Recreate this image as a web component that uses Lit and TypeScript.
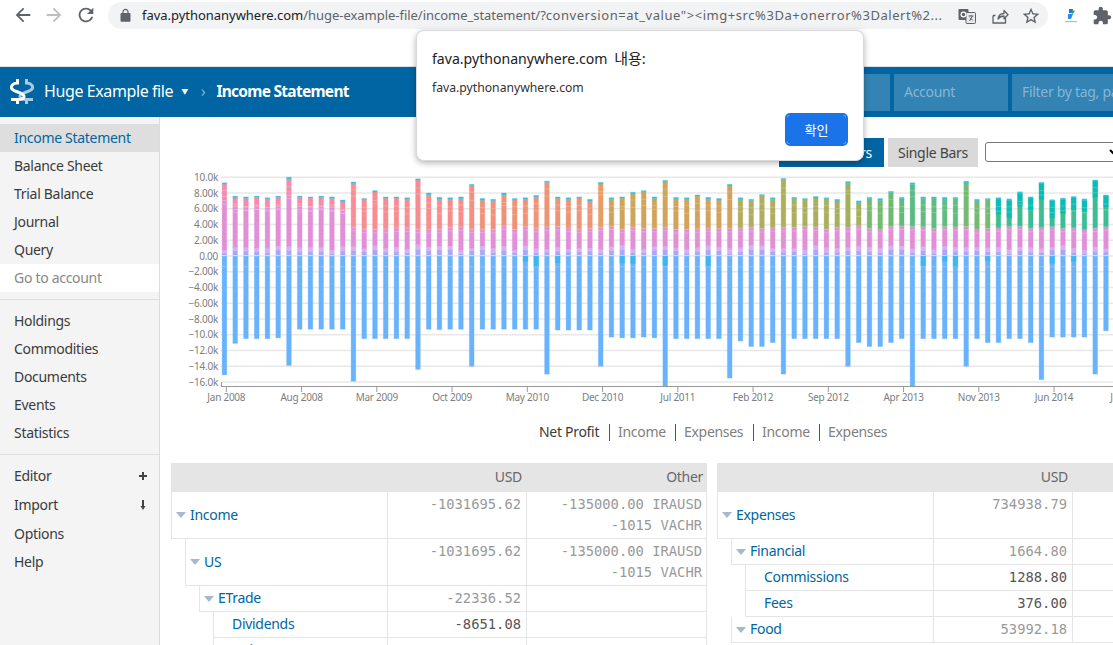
import { LitElement, html, svg, css } from "lit";
import { customElement } from "lit/decorators.js";

const tops = [9.3,7.6,7.5,7.6,7.4,7.6,10.0,7.6,7.5,7.6,7.5,7.1,9.4,7.3,8.3,7.5,7.5,7.4,9.8,
  8.0,7.45,7.4,7.5,9.1,7.3,7.2,8.0,7.3,7.4,7.7,9.5,7.5,7.4,7.5,7.2,9.35,7.4,7.5,8.1,8.3,7.5,9.6,7.45,7.4,7.75,
  7.45,7.3,9.1,7.4,7.2,7.8,7.4,9.85,7.45,7.3,7.55,7.4,7.2,9.45,7.0,7.45,7.3,8.2,7.45,9.3,7.5,7.5,7.45,7.45,9.5,7.2,7.3,7.4,7.25,8.15,7.5,9.35,7.15,7.35,7.55,7.25,9.65,7.75];
const bottoms = [-15.1,-11.1,-10.5,-10.5,-10.5,-10.4,-13.9,-9.3,-9.3,-9.3,-9.3,-9.3,-15.9,-10.5,-10.5,-10.5,-10.5,-10.5,-14.4,-9.3,-9.35,-9.3,-9.3,-14.0,
  -9.3,-9.3,-9.3,-9.3,-9.3,-9.3,-15.0,-9.4,-9.4,-9.4,-9.4,-14.0,-10.3,-10.4,-10.4,-10.3,-10.4,-16.6,-10.5,-10.5,-10.5,-10.5,-10.5,-15.5,-10.8,-11.5,-11.5,-11.0,-15.0,-10.5,-10.5,-10.5,-10.5,-10.5,-14.0,-11.0,-11.5,-11.5,-11.0,-10.5,-16.6,-10.5,-10.5,-10.5,-10.5,-14.0,-10.5,-11.0,-11.0,-10.5,-10.5,-11.0,-15.7,-10.3,-10.3,-10.3,-10.3,-15.0,-9.5];
const stops: [number, number[]][] = [
  [0,[243,140,176]],[11,[247,140,168]],[12,[249,140,148]],[22,[248,140,140]],[24,[239,146,120]],[34,[238,149,117]],[35,[234,156,102]],[36,[208,164,88]],
  [47,[211,163,91]],[48,[178,173,95]],[59,[164,176,92]],[60,[121,185,110]],[62,[110,186,114]],[64,[88,188,130]],[65,[98,188,128]],[68,[98,188,128]],[69,[118,185,114]],[71,[118,185,114]],[72,[63,188,144]],[82,[61,189,150]],
];
function topColor(m: number) {
  for (let i = 0; i < stops.length - 1; i++) {
    const [a, ca] = stops[i];
    const [b, cb] = stops[i + 1];
    if (m >= a && m <= b) {
      const t = (m - a) / (b - a);
      return `rgb(${ca.map((v, j) => Math.round(v + (cb[j] - v) * t)).join(",")})`;
    }
  }
  return "rgb(61,189,150)";
}
const rnd = (m: number, s: number) => {
  const v = Math.sin(m * 12.9898 + s * 78.233) * 43758.5453;
  return v - Math.floor(v);
};
const Y = (k: number) => 86 - 7.875 * k; // svg top is page y 170
const X = (m: number) => 62.1 + 10.75 * m; // svg left is page x 160
const BW = 4.7;

const yLabels: [number, string][] = [[10,"10.0k"],[8,"8.00k"],[6,"6.00k"],[4,"4.00k"],[2,"2.00k"],[0,"0.00"],[-2,"−2.00k"],[-4,"−4.00k"],[-6,"−6.00k"],[-8,"−8.00k"],[-10,"−10.0k"],[-12,"−12.0k"],[-14,"−14.0k"],[-16,"−16.0k"]];
const xLabels = ["Jan 2008","Aug 2008","Mar 2009","Oct 2009","May 2010","Dec 2010","Jul 2011","Feb 2012","Sep 2012","Apr 2013","Nov 2013","Jun 2014","Jan 2015"];

function seg(x: number, from: number, to: number, color: string) {
  const y = Y(to);
  const h = Y(from) - y;
  return svg`<rect class="seg" x=${x} y=${y} width=${BW} height=${h} fill=${color} stroke=${color}></rect>`;
}
function line(x: number, k: number) {
  return svg`<rect x=${x} y=${Y(k)} width=${BW} height="1" fill="#fff" opacity="0.22"></rect>`;
}

function chart() {
  const bars = tops.map((top, m) => {
    const x = X(m);
    const p1 = 0.3 + rnd(m, 1) * 0.55;
    const p2 = p1 + 0.35 + rnd(m, 2) * 0.25;
    const mid = m < 12 ? top - 1.3 - (top > 9 ? 1 : 0) : 3.3 + rnd(m, 3) * 0.5;
    const cap = top - 0.12 - rnd(m, 4) * 0.12;
    const c = topColor(m);
    const cyan = rnd(m, 5) > 0.86 && m > 20;
    const parts = [
      seg(x, bottoms[m], -0.02, "#69b2fd"),
      cyan ? seg(x, -0.6 - rnd(m, 9) * 0.8, -0.02, "#3db6f4") : null,
      seg(x, 0.12, p1, "#a9a7f7"),
      seg(x, p1, p2, "#d5b1ed"),
      seg(x, p2, mid, "#e18fd7"),
      seg(x, mid, cap, c),
      m >= 72 ? seg(x, top - 1.5 - rnd(m, 6), cap, "#0abdb4") : null,
      seg(x, cap, top, "#2cc3e4"),
      line(x, -1.3),
      line(x, mid - 0.35),
      line(x, mid + 0.1),
      line(x, top - 0.9 - rnd(m, 7) * 0.3),
      line(x, top - 1.5 - rnd(m, 8) * 0.5),
    ];
    return parts;
  });
  return html`<svg class="chart" width="953" height="240" viewBox="0 0 953 240">
    ${yLabels.map(([k]) => svg`<line x1="61" x2="953" y1=${Y(k)} y2=${Y(k)} class="grid"></line>`)}
    ${bars}
    <line x1="61" x2="953" y1="216.5" y2="216.5" class="axis"></line>
    <line x1="61.5" x2="61.5" y1="212" y2="216" class="axis"></line>
    ${yLabels.map(([k, t]) => svg`<text x="58" y=${Y(k) + 3.5} text-anchor="end" class="tick">${t}</text>`)}
    ${xLabels.map((t, i) => svg`
      <line x1=${66.3 + 75.25 * i} x2=${66.3 + 75.25 * i} y1="217" y2="222" class="axis"></line>
      <text x=${66.3 + 75.25 * i} y="231" text-anchor="middle" class="tick">${t}</text>`)}
  </svg>`;
}

interface Row { name: string; depth: number; usd: string; other?: string[]; kids?: boolean; leaf?: boolean; tall?: boolean; }
const incomeRows: Row[] = [
  { name: "Income", depth: 0, usd: "-1031695.62", other: ["-135000.00 IRAUSD", "-1015 VACHR"], kids: true, tall: true },
  { name: "US", depth: 1, usd: "-1031695.62", other: ["-135000.00 IRAUSD", "-1015 VACHR"], kids: true, tall: true },
  { name: "ETrade", depth: 2, usd: "-22336.52", kids: true },
  { name: "Dividends", depth: 3, usd: "-8651.08", leaf: true },
  { name: "Gains", depth: 3, usd: "-13685.44", leaf: true },
];
const expenseRows: Row[] = [
  { name: "Expenses", depth: 0, usd: "734938.79", kids: true, tall: true },
  { name: "Financial", depth: 1, usd: "1664.80", kids: true },
  { name: "Commissions", depth: 2, usd: "1288.80", leaf: true },
  { name: "Fees", depth: 2, usd: "376.00", leaf: true },
  { name: "Food", depth: 1, usd: "53992.18", kids: true },
];

@customElement("app-root")
export class AppRoot extends LitElement {
  static styles = css`
    :host { display: block; width: 1113px; height: 645px; overflow: hidden; position: relative; background: #fff;
      font-family: "Noto Sans", "Noto Sans CJK KR", sans-serif; font-size: 14px; letter-spacing: -0.3px; color: #3b3b3b; }
    .chrome { height: 67px; background: #fff; box-sizing: border-box; border-bottom: 1px solid #d9e2e8; letter-spacing: 0; }
    .toolbar { display: flex; height: 36px; align-items: flex-start; padding-left: 7px; }
    .nav { width: 31px; height: 30px; flex: none; display: flex; align-items: center; justify-content: center; fill: #5f6368; }
    .nav.off { fill: #bcbec0; }
    .nav.wide { width: 33px; margin-right: 6px; }
    .pill { width: 940px; flex: none; height: 27px; margin-top: 2px; box-sizing: border-box; background: #f1f3f4; border-radius: 14px; display: flex; align-items: center; padding-left: 10px; }
    .lock { width: 15px; height: 15px; fill: #5f6368; margin-right: 9px; flex: none; }
    .url { width: 806px; flex: none; white-space: nowrap; overflow: hidden; color: #5f6368; font-size: 13px; line-height: 27px; letter-spacing: -0.03px; }
    .url b { font-weight: 400; color: #202124; }
    .url span { letter-spacing: 0.55px; }
    .pill-icons { display: flex; margin-left: 9px; gap: 12px; }
    .pill-icons svg { width: 20px; height: 20px; display: block; }
    .ext { display: flex; flex: none; align-items: center; margin-left: 16px; height: 31px; gap: 14px; }
    .ext svg { display: block; }
    .header { height: 50px; background: #0065a2; color: #fff; display: flex; align-items: center; overflow: hidden; }
    .crumbs { flex: 0 0 760px; display: flex; align-items: center; box-sizing: border-box; padding: 0 0 2px 10px; font-size: 16px; letter-spacing: -0.4px; }
    .logo { width: 24px; height: 28px; margin: 2px 10px 0 0; flex: none; }
    .caret { font-size: 7px; margin: 0 13px 0 8px; }
    .sep { color: #80b2d0; margin-right: 11px; }
    .crumbs strong { font-weight: 700; font-size: 15.5px; letter-spacing: -0.72px; }
    .filters { display: flex; gap: 4px; }
    .filter { height: 37px; line-height: 35px; background: rgba(255,255,255,.2); color: rgba(255,255,255,.42); padding-left: 10px; box-sizing: border-box; font-size: 14px; white-space: nowrap; overflow: hidden; }
    .f1 { width: 130px; } .f2 { width: 114px; } .f3 { width: 230px; }
    .body { display: flex; }
    .side { width: 160px; height: 528px; flex: none; box-sizing: border-box; background: #f4f4f4; border-right: 1px solid #dcdcdc; }
    .sec { padding: 7px 0; border-bottom: 1px solid #dedede; }
    .sec:last-child { border-bottom: 0; }
    .item { height: 28px; line-height: 28px; padding: 0 11px 0 14px; display: flex; justify-content: space-between; align-items: center; }
    .item.big { margin-bottom: 1px; }
    .item.active { background: #dedede; color: #0065a2; }
    .item.go { background: #fff; color: #888; }
    .item svg { display: block; }
    .main { flex: 1; min-width: 0; overflow: hidden; padding-top: 21px; }
    .tools { display: flex; padding-left: 619px; height: 29px; align-items: flex-start; }
    .btn { flex: none; height: 29px; line-height: 29px; box-sizing: border-box; padding: 0 10px; background: #d9d9d9; color: #444; white-space: nowrap; font-size: 14px; }
    .btn.on { background: #0065a2; color: #fff; width: 105px; margin-right: 4px; text-align: center; }
    .btn.off { width: 90px; text-align: center; margin-right: 7px; }
    .tools select { width: 138px; height: 20px; margin-top: 4px; flex: none; background: #fff; border: 1px solid #767676; border-radius: 3px; font-size: 13px; }
    .chart { display: block; margin-top: 3px; }
    .chart .grid { stroke: #e8e8e8; stroke-width: 1.4; }
    .chart .axis { stroke: #999; stroke-width: 1; }
    .chart .tick { font-size: 10px; fill: #7d7d7d; font-family: "Noto Sans", sans-serif; letter-spacing: -0.25px; }
    .chart .seg { stroke-opacity: .28; stroke-width: 1; }
    .legend { display: flex; height: 25px; margin-top: 10px; padding-left: 379px; align-items: center; white-space: nowrap; color: #808080; }
    .legend span { height: 17px; line-height: 15px; box-sizing: content-box; }
    .legend .first { color: #3b3b3b; width: 70px; }
    .legend .lg { border-left: 1px solid #555; padding-left: 8px; }
    .l1 { width: 57px; } .l2 { width: 69px; } .l3 { width: 57px; } .l4 { width: 60px; }
    .trees { display: flex; gap: 10px; margin: 18px 0 0 11px; }
    .tree { flex: none; width: 536px; }
    .thead { display: flex; height: 29px; line-height: 27px; background: #e5e5e5; color: #686868; }
    .row { display: flex; height: 26px; }
    .row.tall { height: 47px; }
    .name { flex: 1; min-width: 0; box-sizing: border-box; display: flex; align-items: center; padding: 0 0 2px 4px; border: solid #e5e5e5; border-width: 0 1px 1px 1px; color: #0065a2; white-space: nowrap; }
    .name.leaf { padding-left: 18px; }
    .tri { width: 0; height: 0; border: solid transparent; border-width: 6px 5px 0; border-top-color: #a9b8c9; margin: 2px 4px 0 0; flex: none; }
    .num { flex: none; box-sizing: border-box; border-right: 1px solid #e5e5e5; border-bottom: 1px solid #e5e5e5; text-align: right; padding: 2px 5px 2px 0; font-family: "DejaVu Sans Mono", "Liberation Mono", monospace; font-size: 13.8px; letter-spacing: 0; line-height: 21px; color: #999; white-space: nowrap; }
    .num.dark { color: #555; }
    .num div { height: 21px; }
    .thead .cell { flex: none; box-sizing: border-box; text-align: right; padding-right: 5px; }
    .c1 { width: 139px; }
    .c2 { width: 180px; padding-right: 4px !important; }
    .thead .grow { flex: 1; }
    .dialog { position: absolute; left: 416px; top: 30px; width: 448px; height: 131px; box-sizing: border-box; background: #fff; border: 1px solid #d8d8d8; border-radius: 8px; box-shadow: 0 2px 6px rgba(0,0,0,.3); padding: 17px 16px 0 15px; color: #202124; display: flex; flex-direction: column; letter-spacing: 0; }
    .d-title { font-size: 14.1px; line-height: 20px; }
    .d-title span { font-size: 15px; margin-left: 3px; }
    .d-msg { font-size: 12.2px; line-height: 16px; margin-top: 11px; color: #333; }
    .d-btn { align-self: flex-end; margin-top: 18px; width: 61px; height: 31px; box-sizing: border-box; background: #1a73e8; color: #fff; border-radius: 4px; border: 1px solid #fff; outline: 2px solid #1a73e8; outline-offset: -1px; font-size: 13px; display: flex; align-items: center; justify-content: center; }
  `;

  private renderTree(rows: Row[]) {
    return html`<div class="tree">
      <div class="thead"><div class="cell grow"></div><div class="cell c1">USD</div><div class="cell c2">Other</div></div>
      ${rows.map((r) => html`<div class="row ${r.tall ? "tall" : ""}">
        <div class="name ${r.leaf ? "leaf" : ""}" style="margin-left:${r.depth * 14}px">${r.kids ? html`<span class="tri"></span>` : null}<span>${r.name}</span></div>
        <div class="num c1 ${r.leaf ? "dark" : ""}">${r.usd}</div>
        <div class="num c2">${(r.other || []).map((o) => html`<div>${o}</div>`)}</div>
      </div>`)}
    </div>`;
  }

  render() {
    return html`
      <div class="chrome">
        <div class="toolbar">
          <div class="nav"><svg width="22" height="22" viewBox="0 0 24 24"><path d="M20 11H7.83l5.59-5.59L12 4l-8 8 8 8 1.41-1.41L7.83 13H20v-2z"/></svg></div>
          <div class="nav off"><svg width="22" height="22" viewBox="0 0 24 24"><path d="M12 4l-1.41 1.41L16.17 11H4v2h12.17l-5.58 5.59L12 20l8-8z"/></svg></div>
          <div class="nav wide"><svg width="22" height="22" viewBox="0 0 24 24"><path d="M17.65 6.35C16.2 4.9 14.21 4 12 4c-4.42 0-7.99 3.58-7.99 8s3.57 8 7.99 8c3.73 0 6.84-2.55 7.73-6h-2.08c-.82 2.33-3.04 4-5.65 4-3.31 0-6-2.69-6-6s2.69-6 6-6c1.66 0 3.14.69 4.22 1.78L13 11h7V4l-2.35 2.35z"/></svg></div>
          <div class="pill">
            <svg class="lock" viewBox="0 0 24 24"><path d="M18 8h-1V6c0-2.76-2.24-5-5-5S7 3.24 7 6v2H6c-1.1 0-2 .9-2 2v10c0 1.1.9 2 2 2h12c1.1 0 2-.9 2-2V10c0-1.1-.9-2-2-2zM9 6c0-1.66 1.34-3 3-3s3 1.34 3 3v2H9V6z"/></svg>
            <div class="url"><b>fava.pythonanywhere.com</b>/huge-example-file/income_statement/?<span>conversion=at_value"&gt;&lt;img+src%3Da+onerror%3Dalert%2...</span></div>
            <div class="pill-icons">
              <svg viewBox="0 0 20 20"><rect x="1.5" y="3" width="10" height="11" rx="1" fill="#5f6368"/><rect x="9" y="6.5" width="9.5" height="11" rx="1" fill="#e8eaed" stroke="#5f6368"/><circle cx="6.5" cy="8.5" r="2.4" fill="none" stroke="#fff" stroke-width="1.2"/><path d="M11.5 10h5M14 9v1M12.5 15l3-5M12.8 11.5l3 3" stroke="#5f6368" fill="none"/></svg>
              <svg viewBox="0 0 20 20"><path d="M4 9.5V17h12.5v-5M4 9.5h2.5M9 13c.5-3.5 3-5.5 6-5.5V4.5l4 4.3-4 4V10c-2.5 0-4.5 1-6 3z" fill="none" stroke="#5f6368" stroke-width="1.3" stroke-linejoin="round"/></svg>
              <svg viewBox="0 0 24 24" fill="#5f6368"><path d="M22 9.24l-7.19-.62L12 2 9.19 8.63 2 9.24l5.46 4.73L5.82 21 12 17.27 18.18 21l-1.63-7.03L22 9.24zM12 15.4l-3.76 2.27 1-4.28-3.32-2.88 4.38-.38L12 6.1l1.71 4.04 4.38.38-3.32 2.88 1 4.28L12 15.4z"/></svg>
            </div>
          </div>
          <div class="ext">
            <svg width="14" height="18" viewBox="0 0 14 18"><path d="M5 2h4l-1 4H5z" fill="#1a73e8"/><path d="M8 3l3 1-2 3-2-1z" fill="#34a853"/><path d="M4 7h5l-2 5H4z" fill="#2a8fe8"/><rect x="1" y="14" width="12" height="1.2" fill="#bbb"/></svg>
            <svg width="20" height="20" viewBox="0 0 24 24" fill="#5f6368"><path d="M20.5 11H19V7c0-1.1-.9-2-2-2h-4V3.5C13 2.12 11.88 1 10.5 1S8 2.12 8 3.5V5H4c-1.1 0-1.99.9-1.99 2v3.8H3.5c1.49 0 2.7 1.21 2.7 2.7s-1.21 2.7-2.7 2.7H2V20c0 1.1.9 2 2 2h3.8v-1.5c0-1.49 1.21-2.7 2.7-2.7 1.49 0 2.7 1.21 2.7 2.7V22H17c1.1 0 2-.9 2-2v-4h1.5c1.38 0 2.5-1.12 2.5-2.5S21.88 11 20.5 11z"/></svg>
          </div>
        </div>
      </div>
      <div class="header">
        <div class="crumbs">
          <svg class="logo" viewBox="0 0 24 28" fill="none" stroke-width="3">
            <path d="M16.5 1V5C20 5 23 7 22.5 10C22 14 11 14 10 18C9.5 21 13 21.5 16 21.5H23M16.5 21V26" stroke="#a9cbe2"/>
            <path d="M7.5 1V5C4 5 1 7 1.5 10C2 14 13 14 14 18C14.5 21 11 21.5 8 21.5H1M7.5 21V26" stroke="#fff"/>
          </svg>
          <span>Huge Example file</span><span class="caret">▼</span><span class="sep">›</span><strong>Income Statement</strong>
        </div>
        <div class="filters">
          <div class="filter f1">Time</div><div class="filter f2">Account</div><div class="filter f3">Filter by tag, payee, ...</div>
        </div>
      </div>
      <div class="body">
        <nav class="side">
          <div class="sec">
            <div class="item active">Income Statement</div>
            <div class="item">Balance Sheet</div>
            <div class="item">Trial Balance</div>
            <div class="item">Journal</div>
            <div class="item">Query</div>
            <div class="item go">Go to account</div>
          </div>
          <div class="sec">
            <div class="item">Holdings</div>
            <div class="item">Commodities</div>
            <div class="item">Documents</div>
            <div class="item">Events</div>
            <div class="item">Statistics</div>
          </div>
          <div class="sec">
            <div class="item big">Editor<svg width="10" height="10" viewBox="0 0 10 10"><path d="M5 1v8M1 5h8" stroke="#444" stroke-width="2"/></svg></div>
            <div class="item big">Import<svg width="10" height="10" viewBox="0 0 10 10"><path d="M5 0v6" stroke="#444" stroke-width="2"/><path d="M2.5 6h5L5 10z" fill="#444"/></svg></div>
            <div class="item">Options</div>
            <div class="item">Help</div>
          </div>
        </nav>
        <main class="main">
          <div class="tools">
            <div class="btn on">Stacked Bars</div>
            <div class="btn off">Single Bars</div>
            <select></select>
          </div>
          ${chart()}
          <div class="legend">
            <span class="first">Net Profit</span>
            <span class="lg l1">Income</span>
            <span class="lg l2">Expenses</span>
            <span class="lg l3">Income</span>
            <span class="lg l4">Expenses</span>
          </div>
          <div class="trees">
            ${this.renderTree(incomeRows)}
            ${this.renderTree(expenseRows)}
          </div>
        </main>
      </div>
      <div class="dialog">
        <div class="d-title">fava.pythonanywhere.com <span>내용:</span></div>
        <div class="d-msg">fava.pythonanywhere.com</div>
        <div class="d-btn">확인</div>
      </div>
    `;
  }
}
